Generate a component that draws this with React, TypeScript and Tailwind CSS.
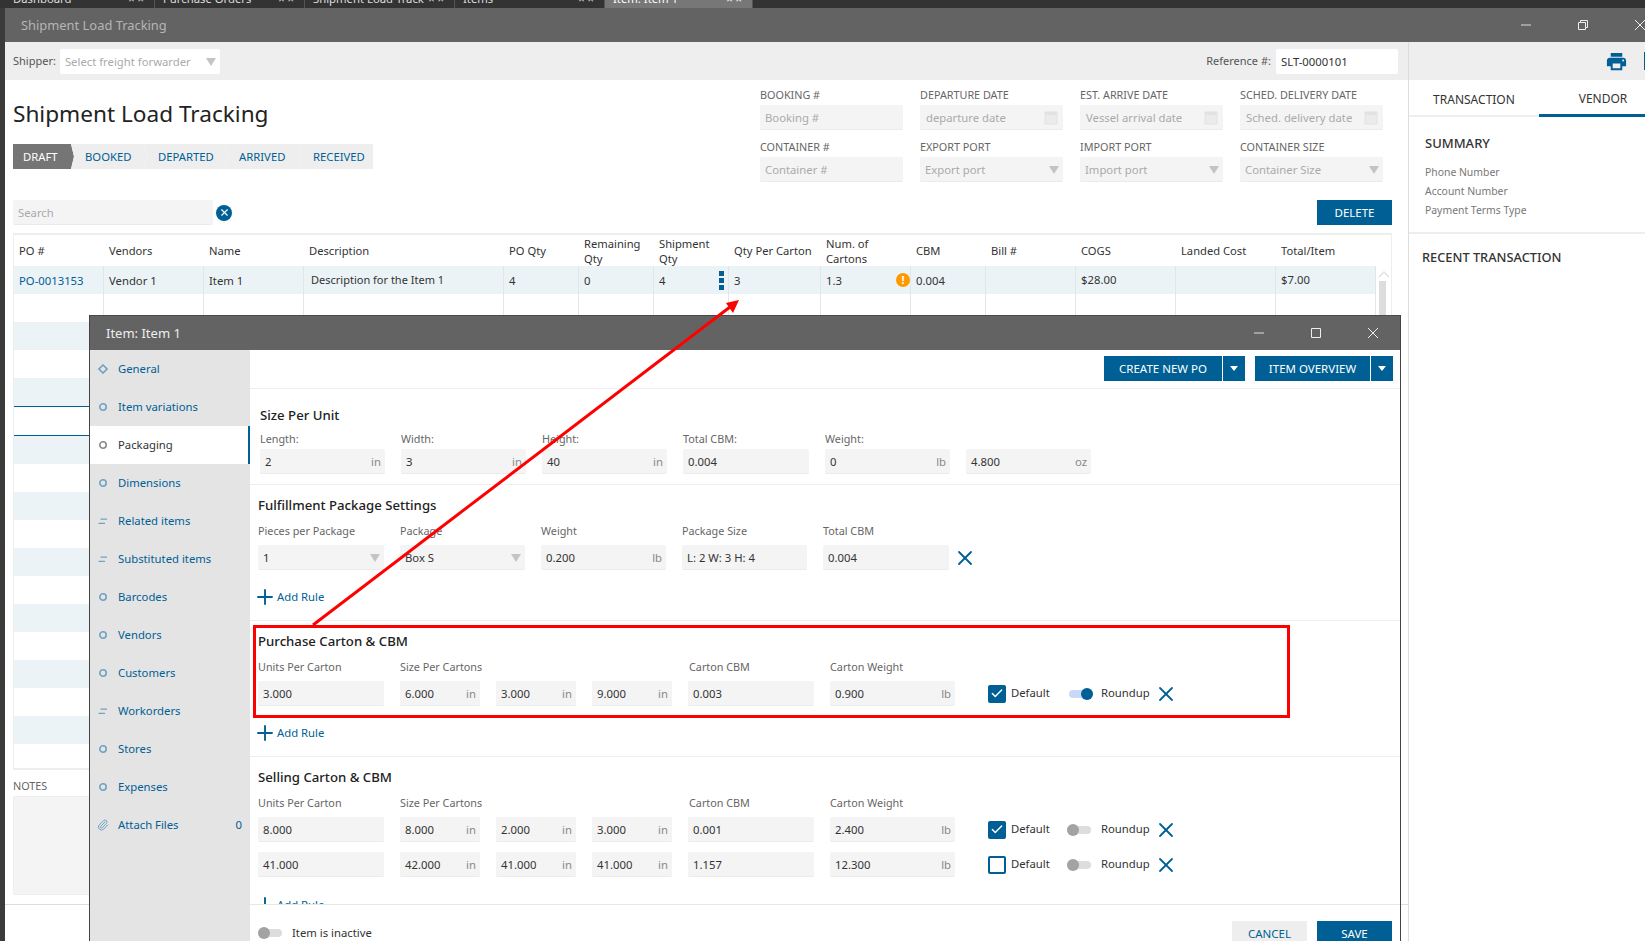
import { MdPrint } from "react-icons/md";
import { Paperclip, Plus, X, Check } from "lucide-react";
import type { ReactNode } from "react";

const topTabs = ["Dashboard", "Purchase Orders", "Shipment Load Track", "Items", "Item: Item 1"];

const statusTabs = [
  { name: "DRAFT", cls: "w-[61px] pl-[10px] bg-[#757575] text-white [clip-path:polygon(0_0,calc(100%-3px)_0,100%_50%,calc(100%-3px)_100%,0_100%)]" },
  { name: "BOOKED", cls: "w-[76px] pl-[14px] -ml-[3px] bg-[#eeeeee] text-[#005f94] [clip-path:polygon(0_0,calc(100%-3px)_0,100%_50%,calc(100%-3px)_100%,0_100%,3px_50%)]" },
  { name: "DEPARTED", cls: "w-[84px] pl-[14px] -ml-[3px] bg-[#eeeeee] text-[#005f94] [clip-path:polygon(0_0,calc(100%-3px)_0,100%_50%,calc(100%-3px)_100%,0_100%,3px_50%)]" },
  { name: "ARRIVED", cls: "w-[76px] pl-[14px] -ml-[3px] bg-[#eeeeee] text-[#005f94] [clip-path:polygon(0_0,calc(100%-3px)_0,100%_50%,calc(100%-3px)_100%,0_100%,3px_50%)]" },
  { name: "RECEIVED", cls: "w-[75px] pl-[15px] -ml-[3px] bg-[#eeeeee] text-[#005f94] [clip-path:polygon(0_0,100%_0,100%_100%,0_100%,3px_50%)]" },
];

const colWidths = [
  "w-[90px]", "w-[100px]", "w-[100px]", "w-[200px]", "w-[75px]", "w-[75px]", "w-[75px]",
  "w-[92px]", "w-[90px]", "w-[75px]", "w-[90px]", "w-[100px]", "w-[100px]", "w-[100px]",
];

const headers = [
  "PO #", "Vendors", "Name", "Description", "PO Qty", "Remaining Qty", "Shipment Qty",
  "Qty Per Carton", "Num. of Cartons", "CBM", "Bill #", "COGS", "Landed Cost", "Total/Item",
];

const firstRow = [
  "PO-0013153", "Vendor 1", "Item 1", "Description for the Item 1", "4", "0", "4",
  "3", "1.3", "0.004", "", "$28.00", "", "$7.00",
];

const rowHeights = [
  "h-[28px]", "h-[28px]", "h-[28px]", "h-[28px]", "h-[28px]", "h-[30px] border-y border-[#005f94]",
  "h-[28px]", "h-[28px]", "h-[28px]", "h-[28px]", "h-[28px]", "h-[28px]", "h-[28px]", "h-[28px]",
  "h-[28px]", "h-[28px]", "h-[28px]", "h-[24px]",
];

const sideItems = [
  { name: "General", icon: "diamond" },
  { name: "Item variations", icon: "circle" },
  { name: "Packaging", icon: "circle", active: true },
  { name: "Dimensions", icon: "circle" },
  { name: "Related items", icon: "lines" },
  { name: "Substituted items", icon: "lines" },
  { name: "Barcodes", icon: "circle" },
  { name: "Vendors", icon: "circle" },
  { name: "Customers", icon: "circle" },
  { name: "Workorders", icon: "lines" },
  { name: "Stores", icon: "circle" },
  { name: "Expenses", icon: "circle" },
  { name: "Attach Files", icon: "clip", count: "0" },
];

function Caret({ className = "" }: { className?: string }) {
  return (
    <svg width="10" height="8" viewBox="0 0 10 8" className={className}>
      <path d="M0 0h10L5 8z" fill="#c4c4c4" />
    </svg>
  );
}

function Box({ value, unit, caret, muted, className = "" }: { value: string; unit?: string; caret?: boolean; muted?: boolean; className?: string }) {
  return (
    <div className={`flex h-[25px] shrink-0 items-center justify-between rounded-[2px] border-b border-[#ebebeb] bg-[#f4f4f4] pl-[5px] pr-[4px] pt-[2px] text-[11.3px] ${muted ? "text-[#aaaaaa]" : "text-[#333333]"} ${className}`}>
      <span className="whitespace-nowrap">{value}</span>
      {unit && <span className="text-[#888888]">{unit}</span>}
      {caret && <Caret />}
    </div>
  );
}

function Field({ label, children }: { label: string; children: ReactNode }) {
  return (
    <div>
      <div className="mb-[2px] h-[16px] text-[10.8px] leading-[16px] text-[#666666]">{label}</div>
      {children}
    </div>
  );
}

function CalendarIcon() {
  return (
    <svg width="14" height="15" viewBox="0 0 14 15">
      <path d="M1 2h12v12H1z" fill="#ebebeb" stroke="#e2e2e2" />
      <path d="M1 2h12v3H1z" fill="#e2e2e2" />
    </svg>
  );
}

function SideIcon({ type, active }: { type: string; active?: boolean }) {
  const color = active ? "#8a8a8a" : "#6fa3c2";
  if (type === "diamond") {
    return (
      <svg width="10" height="10" viewBox="0 0 10 10">
        <path d="M5 1l4 4-4 4-4-4z" fill="none" stroke={color} strokeWidth="1.6" />
      </svg>
    );
  }
  if (type === "lines") {
    return (
      <svg width="10" height="10" viewBox="0 0 10 10">
        <path d="M2.5 3.2H9M0.5 7.4H7" fill="none" stroke={color} strokeWidth="1.3" />
      </svg>
    );
  }
  if (type === "clip") return <Paperclip size={12} color={color} />;
  return (
    <svg width="10" height="10" viewBox="0 0 10 10">
      <circle cx="5" cy="5" r="3.2" fill="none" stroke={color} strokeWidth="1.6" />
    </svg>
  );
}

function RemoveX() {
  return <X size={24} strokeWidth={1.8} className="shrink-0 text-[#005f94]" />;
}

function AddRule({ className = "" }: { className?: string }) {
  return (
    <div className={`flex h-[20px] items-center text-[11.3px] text-[#005f94] ${className}`}>
      <Plus size={24} strokeWidth={1.9} className="-ml-[5px] shrink-0" />
      <span className="pt-[1px]">Add Rule</span>
    </div>
  );
}

function Toggle({ on }: { on?: boolean }) {
  return (
    <div className={`relative h-[8px] w-[24px] shrink-0 rounded-full ${on ? "bg-[#c9d8f6]" : "bg-[#dddddd]"}`}>
      <div className={`absolute -top-[2px] h-[12px] w-[12px] rounded-full ${on ? "right-0 bg-[#005f94]" : "left-0 bg-[#a3a3a3]"}`} />
    </div>
  );
}

function CartonRow({ values, checked, on, className = "" }: { values: string[]; checked?: boolean; on?: boolean; className?: string }) {
  return (
    <div className={`flex h-[25px] items-center ${className}`}>
      <Box value={values[0]} className="w-[126px]" />
      <Box value={values[1]} unit="in" className="ml-[16px] w-[80px]" />
      <Box value={values[2]} unit="in" className="ml-[16px] w-[80px]" />
      <Box value={values[3]} unit="in" className="ml-[16px] w-[80px]" />
      <Box value={values[4]} className="ml-[16px] w-[126px]" />
      <Box value={values[5]} unit="lb" className="ml-[16px] w-[125px]" />
      <div className={`ml-[33px] flex h-[18px] w-[18px] shrink-0 items-center justify-center rounded-[2px] border-2 border-[#005f94] ${checked ? "bg-[#005f94]" : "bg-white"}`}>
        {checked && <Check size={15} strokeWidth={2.5} className="text-white" />}
      </div>
      <span className="ml-[5px] w-[58px] text-[11.3px] text-[#333333]">Default</span>
      <div className={on ? "" : "-ml-[2px] mr-[2px]"}><Toggle on={on} /></div>
      <span className="ml-[8px] w-[53px] text-[11.3px] text-[#333333]">Roundup</span>
      <RemoveX />
    </div>
  );
}

function CartonLabels() {
  return (
    <div className="mt-[8px] flex h-[16px] text-[10.8px] leading-[16px] text-[#666666]">
      <span className="w-[142px]">Units Per Carton</span>
      <span className="w-[289px]">Size Per Cartons</span>
      <span className="w-[141px]">Carton CBM</span>
      <span>Carton Weight</span>
    </div>
  );
}

function ItemModal() {
  return (
    <div className="absolute left-[89px] top-[315px] flex h-[626px] w-[1312px] flex-col border-x border-[#444444] bg-white">
      <div className="flex h-[35px] shrink-0 items-center justify-between border-t border-[#4a4a4a] bg-[#636363] pl-[16px] pr-[22px] text-[13px] text-[#eeeeee]">
        <span className="pt-[2px]">Item: Item 1</span>
        <div className="flex items-center gap-[47px]">
          <svg width="10" height="10" viewBox="0 0 10 10"><path d="M0 5h10" stroke="#cccccc" strokeWidth="1.2" /></svg>
          <svg width="10" height="10" viewBox="0 0 10 10"><path d="M.5.5h9v9h-9z" fill="none" stroke="#eeeeee" /></svg>
          <svg width="10" height="10" viewBox="0 0 10 10"><path d="M0 0l10 10M10 0L0 10" stroke="#eeeeee" /></svg>
        </div>
      </div>
      <div className="flex min-h-0 flex-1">
        <div className="w-[160px] shrink-0 bg-[#e4e4e4]">
          {sideItems.map(item => (
            <div key={item.name} className={`flex h-[38px] items-center pl-[3px] text-[11.3px] ${item.active ? "border-r-2 border-[#005f94] bg-white text-[#333333]" : "text-[#005f94]"}`}>
              <span className="mr-[5px] flex w-[20px] justify-center"><SideIcon type={item.icon} active={item.active} /></span>
              <span className="flex-1 pt-[1px]">{item.name}</span>
              {item.count && <span className="pr-[8px] pt-[1px]">{item.count}</span>}
            </div>
          ))}
        </div>
        <div className="flex min-w-0 flex-1 flex-col">
          <div className="flex h-[39px] shrink-0 items-start justify-end gap-[10px] border-b border-[#eeeeee] pr-[7px] pt-[6px]">
            <div className="flex gap-[1px]">
              <div className="flex h-[25px] w-[118px] items-center justify-center bg-[#005f94] pt-[1px] text-[11.5px] text-white">CREATE NEW PO</div>
              <div className="flex h-[25px] w-[22px] items-center justify-center bg-[#005f94]"><svg width="8" height="5" viewBox="0 0 8 5"><path d="M0 0h8L4 5z" fill="#fff" /></svg></div>
            </div>
            <div className="flex gap-[1px]">
              <div className="flex h-[25px] w-[115px] items-center justify-center bg-[#005f94] pt-[1px] text-[11.5px] text-white">ITEM OVERVIEW</div>
              <div className="flex h-[25px] w-[22px] items-center justify-center bg-[#005f94]"><svg width="8" height="5" viewBox="0 0 8 5"><path d="M0 0h8L4 5z" fill="#fff" /></svg></div>
            </div>
          </div>
          <div className="min-h-0 flex-1 overflow-hidden">
            <div className="h-[96px] border-b border-[#eeeeee] pl-[10px] pt-[16px]">
              <div className="mb-[6px] h-[20px] text-[13.2px] font-medium leading-[20px] text-[#222222]">Size Per Unit</div>
              <div className="flex gap-[16px]">
                <Field label="Length:"><Box value="2" unit="in" className="w-[125px]" /></Field>
                <Field label="Width:"><Box value="3" unit="in" className="w-[125px]" /></Field>
                <Field label="Height:"><Box value="40" unit="in" className="w-[125px]" /></Field>
                <Field label="Total CBM:"><Box value="0.004" className="w-[126px]" /></Field>
                <Field label="Weight:"><Box value="0" unit="lb" className="w-[125px]" /></Field>
                <Field label=" "><Box value="4.800" unit="oz" className="w-[125px]" /></Field>
              </div>
            </div>
            <div className="h-[136px] border-b border-[#eeeeee] pl-[8px] pt-[10px]">
              <div className="h-[20px] text-[13.2px] font-medium leading-[20px] text-[#222222]">Fulfillment Package Settings</div>
              <div className="mt-[8px] flex gap-[16px]">
                {[
                  { label: "Pieces per Package", value: "1", caret: true, w: "w-[126px]" },
                  { label: "Package", value: "Box S", caret: true, w: "w-[125px]" },
                  { label: "Weight", value: "0.200", unit: "lb", w: "w-[125px]" },
                  { label: "Package Size", value: "L: 2 W: 3 H: 4", w: "w-[125px]" },
                  { label: "Total CBM", value: "0.004", w: "w-[126px]" },
                ].map(f => (
                  <div key={f.label}>
                    <div className="mb-[6px] h-[16px] text-[10.8px] leading-[16px] text-[#666666]">{f.label}</div>
                    <Box value={f.value} unit={f.unit} caret={f.caret} className={f.w} />
                  </div>
                ))}
                <div className="-ml-[12px] mt-[22px] flex h-[25px] items-center"><RemoveX /></div>
              </div>
              <AddRule className="mt-[17px]" />
            </div>
            <div className="h-[136px] border-b border-[#eeeeee] pl-[8px] pt-[10px]">
              <div className="h-[20px] text-[13.2px] font-medium leading-[20px] text-[#222222]">Purchase Carton &amp; CBM</div>
              <CartonLabels />
              <CartonRow on checked className="mt-[6px]" values={["3.000", "6.000", "3.000", "9.000", "0.003", "0.900"]} />
              <AddRule className="mt-[17px]" />
            </div>
            <div className="pl-[8px] pt-[10px]">
              <div className="h-[20px] text-[13.2px] font-medium leading-[20px] text-[#222222]">Selling Carton &amp; CBM</div>
              <CartonLabels />
              <CartonRow checked className="mt-[6px]" values={["8.000", "8.000", "2.000", "3.000", "0.001", "2.400"]} />
              <CartonRow className="mt-[10px]" values={["41.000", "42.000", "41.000", "41.000", "1.157", "12.300"]} />
              <AddRule className="mt-[18px]" />
            </div>
          </div>
          <div className="flex h-[37px] shrink-0 items-start justify-between border-t border-[#e6e6e6] pl-[8px] pr-[8px]">
            <div className="mt-[18px] flex items-center gap-[10px] text-[11.3px] leading-[20px] text-[#333333]">
              <Toggle />
              <span>Item is inactive</span>
            </div>
            <div className="mt-[16px] flex gap-[10px] text-[11.5px]">
              <div className="flex h-[25px] w-[75px] items-center justify-center bg-[#eeeeee] text-[#005f94]">CANCEL</div>
              <div className="flex h-[25px] w-[75px] items-center justify-center bg-[#005f94] text-white">SAVE</div>
            </div>
          </div>
        </div>
      </div>
    </div>
  );
}

function LoadTable() {
  return (
    <div className="mt-[8px] w-[1379px] border-x border-y-2 border-[#eeeeee] text-[11.3px] text-[#333333]">
      <div className="flex h-[31px] items-center">
        {headers.map((h, i) => (
          <div key={h} className={`shrink-0 pl-[5px] pr-[2px] text-[11.2px] leading-[15px] ${colWidths[i]}`}>{h}</div>
        ))}
      </div>
      <div className="relative">
        <div className="flex h-[28px] w-[1362px] items-center bg-[#ebf3f7]">
          {firstRow.map((c, i) => (
            <div key={i} className={`relative flex h-full shrink-0 items-center border-r border-[#dfe7eb] pl-[5px] ${i === 3 ? "pl-[7px] text-[11px]" : i === 11 || i === 13 ? "pt-[1px]" : "pt-[3px]"} ${i === 0 ? "text-[#005f94]" : ""} ${colWidths[i]}`}>
              {c}
              {i === 6 && (
                <div className="absolute right-[4px] top-[5px] flex flex-col gap-[2px]">
                  <span className="h-[5px] w-[5px] bg-[#005f94]" />
                  <span className="h-[5px] w-[5px] bg-[#005f94]" />
                  <span className="h-[5px] w-[5px] bg-[#005f94]" />
                </div>
              )}
              {i === 8 && <span className="absolute right-0 top-[7px] flex h-[14px] w-[14px] items-center justify-center rounded-full bg-[#ff9900] text-[11px] font-bold text-white">!</span>}
            </div>
          ))}
        </div>
        {rowHeights.slice(1).map((h, i) => (
          <div key={i} className={`flex w-[1362px] ${h} ${i % 2 === 1 ? "bg-[#ebf3f7]" : "bg-white"}`}>
            {i === 0 && colWidths.map((w, j) => (
              <div key={j} className={`h-full shrink-0 border-r border-[#e6e6e6] ${w}`} />
            ))}
          </div>
        ))}
        <svg width="12" height="7" viewBox="0 0 12 7" className="absolute left-[1364px] top-[5px]">
          <path d="M1 6l5-5 5 5" fill="none" stroke="#e2e2e2" strokeWidth="1.5" />
        </svg>
        <div className="absolute left-[1365px] top-[15px] h-[60px] w-[7px] bg-[#dddddd]" />
      </div>
    </div>
  );
}

function Main() {
  return (
    <div className="w-[1403px] shrink-0 bg-white">
      <div className="flex h-[38px] items-center justify-between bg-[#eeeeee] pl-[8px] pr-[10px] text-[11px] text-[#555555]">
        <div className="flex items-center gap-[4px]">
          <span>Shipper:</span>
          <div className="flex h-[25px] w-[160px] items-center justify-between rounded-[2px] bg-white pl-[5px] pr-[4px] pt-[2px] text-[11.3px] text-[#aaaaaa]">
            <span>Select freight forwarder</span>
            <Caret />
          </div>
        </div>
        <div className="flex items-center gap-[5px]">
          <span className="pt-[1px]">Reference #:</span>
          <div className="flex h-[25px] w-[122px] items-center rounded-[2px] bg-white pl-[5px] pt-[2px] text-[11.3px] text-[#333333]">SLT-0000101</div>
        </div>
      </div>

      <div className="flex h-[120px] justify-between pl-[8px] pr-[25px]">
        <div className="pt-[16px]">
          <div className="h-[36px] whitespace-nowrap text-[22.6px] leading-[36px] text-[#222222]">Shipment Load Tracking</div>
          <div className="mt-[12px] flex">
            {statusTabs.map(t => (
              <div key={t.name} className={`flex h-[25px] items-center pt-[1px] text-[11.3px] ${t.cls}`}>{t.name}</div>
            ))}
          </div>
        </div>
        <div className="grid h-fit grid-cols-[143px_143px_143px_143px] gap-x-[17px] gap-y-[9px] pt-[7px]">
          <Field label="BOOKING #"><Box value="Booking #" muted className="w-[143px]" /></Field>
          <Field label="DEPARTURE DATE">
            <div className="relative"><Box value="departure date" muted className="w-[143px] pl-[6px]" /><span className="absolute right-[5px] top-[5px]"><CalendarIcon /></span></div>
          </Field>
          <Field label="EST. ARRIVE DATE">
            <div className="relative"><Box value="Vessel arrival date" muted className="w-[143px] pl-[6px]" /><span className="absolute right-[5px] top-[5px]"><CalendarIcon /></span></div>
          </Field>
          <Field label="SCHED. DELIVERY DATE">
            <div className="relative"><Box value="Sched. delivery date" muted className="w-[143px] pl-[6px]" /><span className="absolute right-[5px] top-[5px]"><CalendarIcon /></span></div>
          </Field>
          <Field label="CONTAINER #"><Box value="Container #" muted className="w-[143px]" /></Field>
          <Field label="EXPORT PORT"><Box value="Export port" muted caret className="w-[143px]" /></Field>
          <Field label="IMPORT PORT"><Box value="Import port" muted caret className="w-[143px]" /></Field>
          <Field label="CONTAINER SIZE"><Box value="Container Size" muted caret className="w-[143px]" /></Field>
        </div>
      </div>

      <div className="pl-[8px]">
        <div className="flex w-[1379px] items-center justify-between">
          <div className="flex items-center gap-[3px]">
            <Box value="Search" muted className="w-[200px]" />
            <span className="flex h-[16px] w-[16px] items-center justify-center rounded-full bg-[#005f94] text-white">
              <X size={11} strokeWidth={2.5} />
            </span>
          </div>
          <div className="flex h-[25px] w-[75px] items-center justify-center bg-[#005f94] pt-[1px] text-[11.5px] text-white">DELETE</div>
        </div>
        <LoadTable />
        <div className="mt-[7px] h-[19px] text-[10.8px] leading-[18px] text-[#666666]">NOTES</div>
        <div className="h-[99px] w-[100px] rounded-[2px] border border-[#eeeeee] bg-[#f4f4f4]" />
      </div>
      <div className="mt-[9px] h-[37px] border-t border-[#dddddd]" />
    </div>
  );
}

function RightPanel() {
  return (
    <div className="relative min-w-0 flex-1 overflow-hidden border-l border-[#dddddd] bg-white">
      <div className="flex h-[38px] items-center justify-end bg-[#eeeeee] pr-[17px]">
        <MdPrint size={23} className="text-[#005f94]" />
        <div className="absolute right-0 top-[10px] h-[18px] w-[1px] bg-[#005f94]" />
      </div>
      <div className="flex h-[37px] border-b-2 border-[#eeeeee] text-[12px] text-[#333333]">
        <div className="flex w-[130px] shrink-0 items-center justify-center pt-[4px]">TRANSACTION</div>
        <div className="-mb-[2px] flex w-[128px] shrink-0 items-center justify-center border-b-[3px] border-[#005f94] pt-[4px]">VENDOR</div>
      </div>
      <div className="h-[117px] border-b-2 border-[#eeeeee] pl-[16px] pt-[16px]">
        <div className="mb-[10px] h-[20px] text-[13px] font-medium leading-[20px] text-[#333333]">SUMMARY</div>
        {["Phone Number", "Account Number", "Payment Terms Type"].map(t => (
          <div key={t} className="h-[19px] text-[10.4px] leading-[19px] text-[#777777]">{t}</div>
        ))}
      </div>
      <div className="whitespace-nowrap pl-[13px] pt-[14px] text-[12.8px] font-medium text-[#333333]">RECENT TRANSACTION</div>
    </div>
  );
}

export default function App() {
  return (
    <div className="relative flex h-[941px] w-[1645px] flex-col overflow-hidden bg-[#3b3b3b] font-['Noto_Sans',sans-serif]">
      <div className="flex h-[8px] shrink-0 overflow-hidden bg-[#333333] text-[11.3px] text-[#dddddd]">
        {topTabs.map((t, i) => (
          <div key={t} className={`flex h-[8px] justify-between border-r border-[#555555] pr-[10px] ${i === 0 ? "w-[155px] pl-[13px]" : i === 4 ? "w-[148px] bg-[#777777] pl-[8px] text-white" : "w-[150px] pl-[8px]"}`}>
            <span className="-mt-[9px] leading-[16px]">{t}</span>
            <span className="-mt-[9px] leading-[16px]">× ×</span>
          </div>
        ))}
      </div>
      <div className="ml-[5px] flex h-[34px] shrink-0 items-center justify-between bg-[#636363] pl-[16px] text-[12.9px] text-[#b5b5b5]">
        <span className="pt-[2px]">Shipment Load Tracking</span>
        <div className="flex items-center gap-[47px]">
          <svg width="10" height="10" viewBox="0 0 10 10"><path d="M0 5h10" stroke="#c8c8c8" strokeWidth="1.2" /></svg>
          <svg width="10" height="10" viewBox="0 0 10 10"><path d="M.5 2.5h7v7h-7zM2.5 2.5v-2h7v7h-2" fill="none" stroke="#eeeeee" /></svg>
          <svg width="10" height="10" viewBox="0 0 10 10"><path d="M0 0l10 10M10 0L0 10" stroke="#eeeeee" /></svg>
        </div>
      </div>
      <div className="ml-[5px] flex min-h-0 flex-1">
        <Main />
        <RightPanel />
      </div>

      <ItemModal />

      {/* annotation drawn on top of the screenshot */}
      <div className="absolute left-[253px] top-[625px] h-[93px] w-[1037px] border-[3px] border-[#ff0000]" />
      <svg width="1645" height="941" className="pointer-events-none absolute left-0 top-0">
        <path d="M313 625L730 307" stroke="#ff0000" strokeWidth="3" fill="none" />
        <path d="M739 300L726 303L733 313z" fill="#ff0000" />
      </svg>
    </div>
  );
}
